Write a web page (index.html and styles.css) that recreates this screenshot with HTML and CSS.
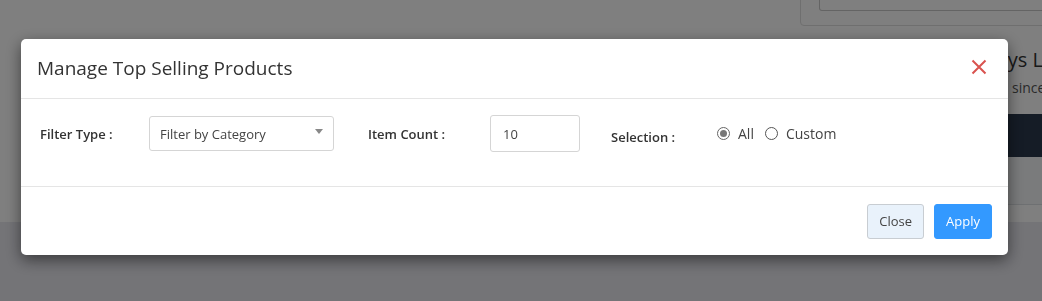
FILE: index.html
```html
<!DOCTYPE html>
<html lang="en">
<head>
  <meta charset="UTF-8">
  <meta name="viewport" content="width=device-width, initial-scale=1.0">
  <title>Manage Top Selling Products</title>
  <link rel="stylesheet" href="styles.css">
</head>
<body>
  <!-- page behind the dialog -->
  <div class="page">
    <div class="page-top">
      <div class="side-card">
        <div class="side-input"></div>
      </div>
      <div class="side-panel">
        <h3 class="side-title">Last 7 Days Leads</h3>
        <p class="side-sub">since last week</p>
        <div class="side-dark"></div>
        <div class="side-light"></div>
      </div>
    </div>
  </div>

  <div class="backdrop"></div>

  <div class="modal">
    <div class="modal-header">
      <h4 class="modal-title">Manage Top Selling Products</h4>
      <button class="modal-close" title="Close">
        <svg width="16" height="16" viewBox="0 0 16 16">
          <path d="M1.5 1.5 L14.5 14.5 M14.5 1.5 L1.5 14.5" stroke="#d9534f" stroke-width="2" fill="none"/>
        </svg>
      </button>
    </div>

    <div class="modal-body">
      <div class="field">
        <label class="field-label">Filter Type :</label>
        <div class="select-box">
          <span>Filter by Category</span>
          <span class="caret"></span>
        </div>
      </div>
      <div class="field">
        <label class="field-label">Item Count :</label>
        <input class="count-input" type="text" value="10">
      </div>
      <div class="field field-selection">
        <label class="field-label label-low">Selection :</label>
        <div class="radios">
          <label class="radio"><input type="radio" name="sel" checked> All</label>
          <label class="radio"><input type="radio" name="sel"> Custom</label>
        </div>
      </div>
    </div>

    <div class="modal-footer">
      <button class="btn btn-close">Close</button>
      <button class="btn btn-apply">Apply</button>
    </div>
  </div>
</body>
</html>
```

FILE: styles.css
```css
/* Base */
body {
  margin: 0;
  font-family: "Open Sans", "Noto Sans", sans-serif;
  color: #333;
  background-color: #e8e8ef;
  height: 301px;
  overflow: hidden;
}

/* Page behind the dialog */
.page {
  height: 301px;
}

.page-top {
  position: relative;
  height: 222px;
  background-color: #fff;
  overflow: hidden;
}

.side-card {
  position: absolute;
  left: 800px;
  top: -10px;
  width: 260px;
  height: 36px;
  border: 1px solid #dedede;
  border-radius: 4px;
  box-sizing: border-box;
}

.side-input {
  margin-left: 18px;
  height: 19px;
  border: 1px solid #c8c8c8;
  border-top: none;
  border-radius: 0 0 3px 3px;
}

.side-panel {
  position: absolute;
  left: 922px;
  top: 46px;
  width: 140px;
}

.side-title {
  margin: 0;
  font-size: 20px;
  font-weight: 400;
  white-space: nowrap;
  color: #333;
}

.side-sub {
  margin: 5px 0 0 90px;
  font-size: 14px;
  white-space: nowrap;
  color: #555;
}

.side-dark {
  margin-top: 17px;
  height: 43px;
  background-color: #2a384c;
}

.side-light {
  height: 47px;
  background-color: #f4f6f8;
  border-bottom: 1px solid #dde0e4;
}

/* Dimmed overlay */
.backdrop {
  position: fixed;
  inset: 0;
  background-color: rgba(0, 0, 0, 0.5);
}

/* Dialog */
.modal {
  position: fixed;
  left: 21px;
  top: 39px;
  width: 987px;
  background-color: #fff;
  border-radius: 5px;
  box-shadow: 0 5px 15px rgba(0, 0, 0, 0.5);
}

.modal-header {
  display: flex;
  align-items: center;
  justify-content: space-between;
  height: 59px;
  padding: 0 21px 0 16px;
  border-bottom: 1px solid #e5e5e5;
}

.modal-title {
  margin: 0 0 2px;
  font-size: 19px;
  font-weight: 400;
  color: #333;
}

.modal-close {
  background: none;
  border: none;
  padding: 0;
  margin-bottom: 3px;
  cursor: pointer;
  line-height: 0;
}

.modal-body {
  display: flex;
  align-items: flex-start;
  height: 71px;
  padding: 16px 19px 0;
  border-bottom: 1px solid #e5e5e5;
}

.field {
  display: flex;
  align-items: center;
  height: 37px;
}

.field-label {
  font-size: 13px;
  font-weight: 600;
  color: #333;
}

.field:first-child .field-label {
  width: 109px;
}

.field:nth-child(2) {
  margin-left: 34px;
}

.field:nth-child(2) .field-label {
  width: 122px;
}

.field-selection {
  margin-left: 31px;
}

.label-low {
  width: 106px;
  margin-top: 6px;
}

/* Select */
.select-box {
  display: flex;
  align-items: center;
  justify-content: space-between;
  width: 185px;
  height: 35px;
  padding: 0 10px;
  box-sizing: border-box;
  border: 1px solid #d5d5d5;
  border-radius: 3px;
  font-size: 13px;
  color: #444;
}

.caret {
  width: 0;
  height: 0;
  border-left: 4px solid transparent;
  border-right: 4px solid transparent;
  border-top: 5px solid #888;
  margin-top: -4px;
}

/* Count input */
.count-input {
  width: 90px;
  height: 37px;
  box-sizing: border-box;
  padding: 0 12px;
  border: 1px solid #d5d5d5;
  border-radius: 3px;
  font-family: inherit;
  font-size: 13px;
  color: #444;
}

/* Radios */
.radios {
  display: flex;
  align-items: center;
  gap: 11px;
}

.radio {
  display: flex;
  align-items: center;
  gap: 8px;
  font-size: 14px;
  color: #444;
}

.radio input {
  appearance: none;
  margin: 0;
  width: 13px;
  height: 13px;
  border: 1px solid #555;
  border-radius: 50%;
  box-sizing: border-box;
  position: relative;
}

.radio input:checked {
  border-color: #666;
}

.radio input:checked::after {
  content: "";
  position: absolute;
  left: 2px;
  top: 2px;
  width: 7px;
  height: 7px;
  border-radius: 50%;
  background-color: #777;
}

/* Footer */
.modal-footer {
  display: flex;
  justify-content: flex-end;
  align-items: center;
  gap: 10px;
  height: 68px;
  padding: 0 16px;
}

.btn {
  height: 35px;
  padding: 0 11px;
  border-radius: 3px;
  font-family: inherit;
  font-size: 13px;
  cursor: pointer;
}

.btn-close {
  background-color: #e9f2fb;
  border: 1px solid #c8cdd2;
  color: #444;
}

.btn-apply {
  background-color: #3399ff;
  border: 1px solid #3399ff;
  color: #fff;
}
```
